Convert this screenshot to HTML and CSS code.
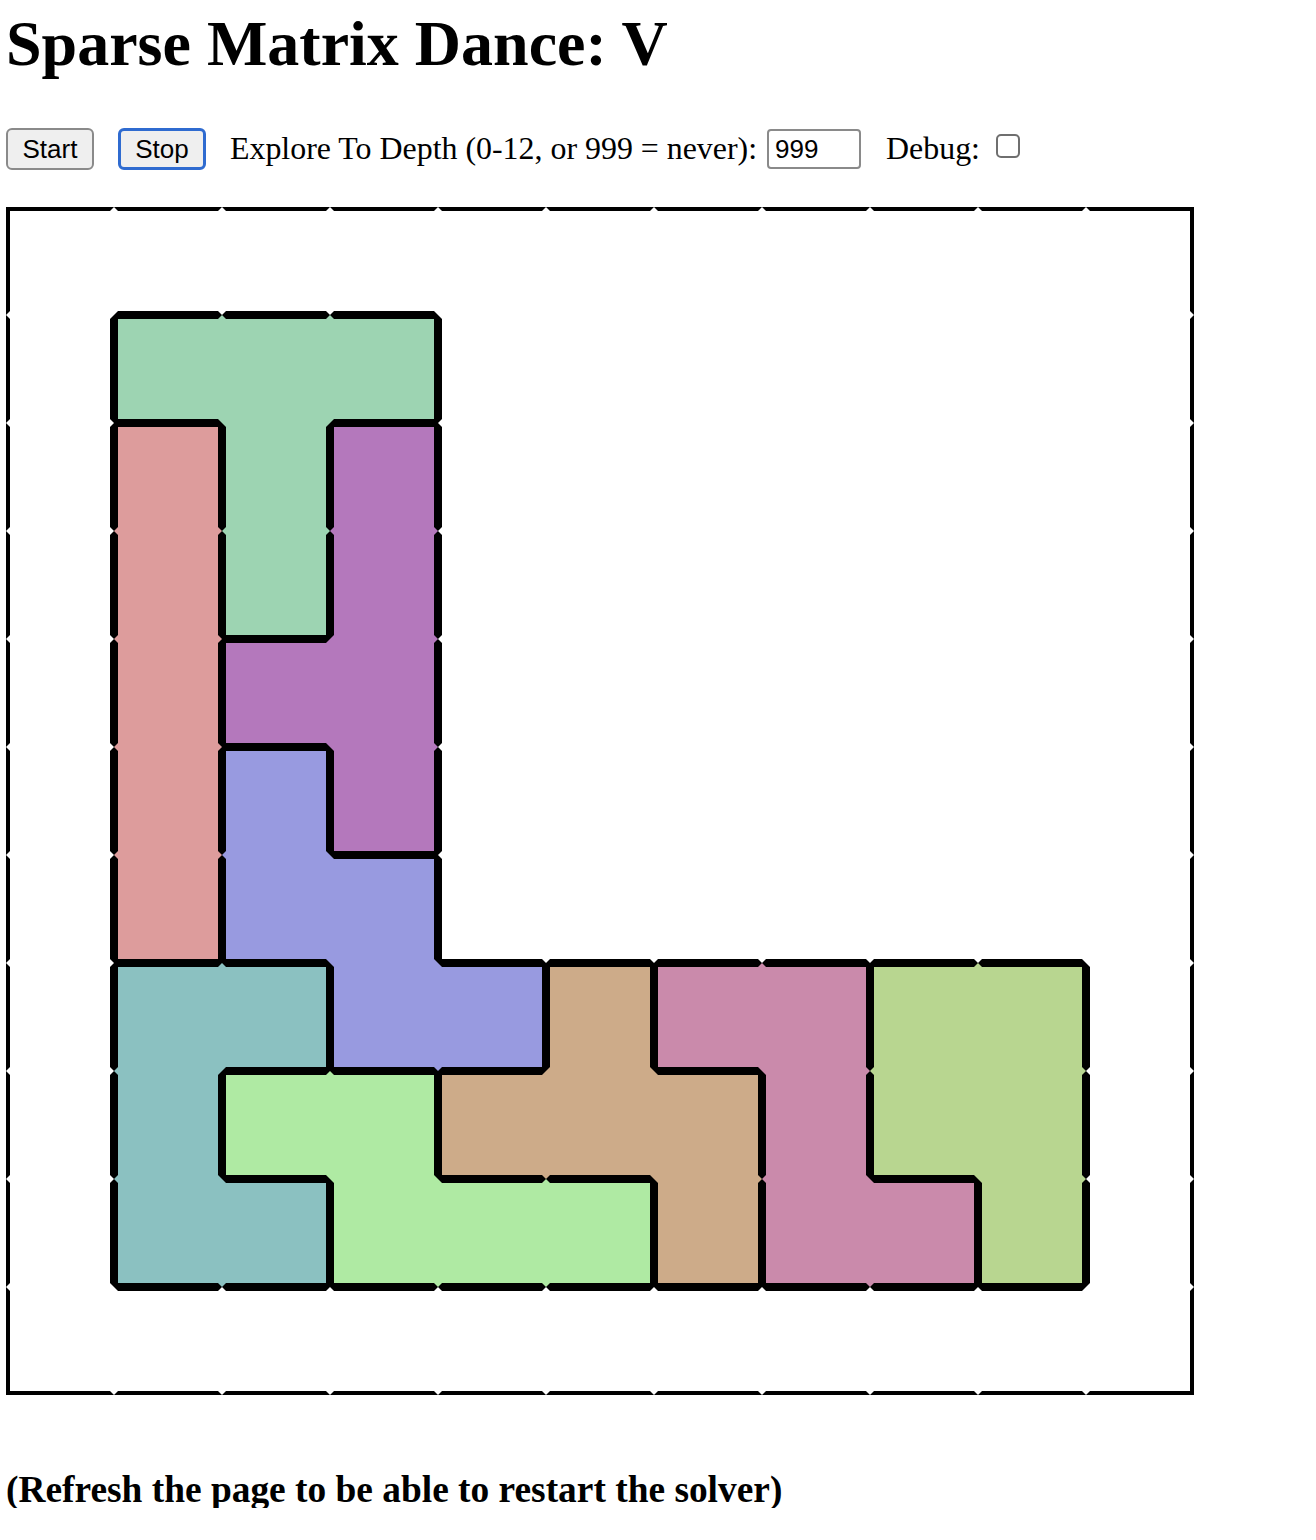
FILE: index.html
```html
<!DOCTYPE html>
<html>
<head>
<meta charset="utf-8">
<title>Sparse Matrix Dance: V</title>
<link rel="stylesheet" href="styles.css">
</head>
<body>
<h1 class="title">Sparse Matrix Dance: V</h1>
<div class="controls">
  <button class="btn">Start</button>
  <button class="btn btn-focus">Stop</button>
  <label class="label label-depth">Explore To Depth (0-12, or 999 = never):</label>
  <input class="depth" type="text" value="999">
  <label class="label label-debug">Debug:</label>
  <span class="check"></span>
</div>
<div class="board" id="board"
  data-map=".........../.GGG......./.RGP......./.RGP......./.RPP......./.RBP......./.RBB......./.TTBBNKKLL./.TMMNNNKLL./.TTMMMNKKL./...........">
</div>
<h3 class="note">(Refresh the page to be able to restart the solver)</h3>
<script src="script.js"></script>
</body>
</html>
```
FILE: styles.css
```css
html, body {
  margin: 0;
  padding: 0;
  background: #ffffff;
}
body {
  padding: 0 6px;
  font-family: "Liberation Serif", "Times New Roman", serif;
  color: #000;
}
.title {
  margin: 12px 0 0 0;
  font-size: 64px;
  line-height: 64px;
  font-weight: bold;
}
.controls {
  display: flex;
  align-items: center;
  height: 42px;
  margin-top: 52px;
}
.btn {
  box-sizing: border-box;
  width: 88px;
  height: 42px;
  margin: 0 24px 0 0;
  padding: 0;
  font-family: "Liberation Sans", Arial, sans-serif;
  font-size: 26px;
  color: #000;
  background: #efefef;
  border: 2px solid #8a8a8a;
  border-radius: 6px;
}
.btn-focus {
  border: 3px solid #2f6bd0;
  border-radius: 6px;
}
.label {
  font-size: 31.9px;
  line-height: 42px;
}
.depth {
  box-sizing: border-box;
  width: 94px;
  height: 40px;
  margin: 0 0 0 10px;
  padding: 0 6px;
  font-family: "Liberation Sans", Arial, sans-serif;
  font-size: 26px;
  color: #000;
  border: 2px solid #8a8a8a;
  border-radius: 4px;
  background: #fff;
}
.label-debug {
  margin-left: 25px;
}
.check {
  box-sizing: border-box;
  width: 24px;
  height: 24px;
  margin: -6px 0 0 16px;
  border: 2px solid #6f6f6f;
  border-radius: 5px;
  background: #fff;
}
.board {
  display: grid;
  grid-template-columns: repeat(11, 108px);
  grid-template-rows: repeat(11, 108px);
  width: 1188px;
  margin-top: 37px;
}
.cell {
  box-sizing: border-box;
  border: 4px solid var(--c);
  background: var(--c);
  --c: #ffffff;
}
.cell.bt { border-top-color: #000; }
.cell.br { border-right-color: #000; }
.cell.bb { border-bottom-color: #000; }
.cell.bl { border-left-color: #000; }
.p-G { --c: #9dd4b2; }
.p-R { --c: #dd9c9c; }
.p-P { --c: #b478bc; }
.p-B { --c: #989ae0; }
.p-T { --c: #8bc1c1; }
.p-M { --c: #afeaa3; }
.p-N { --c: #cdab89; }
.p-K { --c: #ca8aab; }
.p-L { --c: #b8d690; }
.note {
  margin: 76px 0 0 0;
  font-size: 37.4px;
  line-height: 37.4px;
  font-weight: bold;
}
```
FILE: script.js
```js
(function () {
  var board = document.getElementById('board');
  var rows = board.getAttribute('data-map').split('/');
  var n = rows.length;
  function at(r, c) {
    if (r < 0 || c < 0 || r >= n || c >= n) return null;
    return rows[r].charAt(c);
  }
  for (var r = 0; r < n; r++) {
    for (var c = 0; c < n; c++) {
      var k = at(r, c);
      var d = document.createElement('div');
      var cls = ['cell'];
      if (k !== '.') cls.push('p-' + k);
      if (at(r - 1, c) !== k) cls.push('bt');
      if (at(r, c + 1) !== k) cls.push('br');
      if (at(r + 1, c) !== k) cls.push('bb');
      if (at(r, c - 1) !== k) cls.push('bl');
      d.className = cls.join(' ');
      board.appendChild(d);
    }
  }
})();
```
